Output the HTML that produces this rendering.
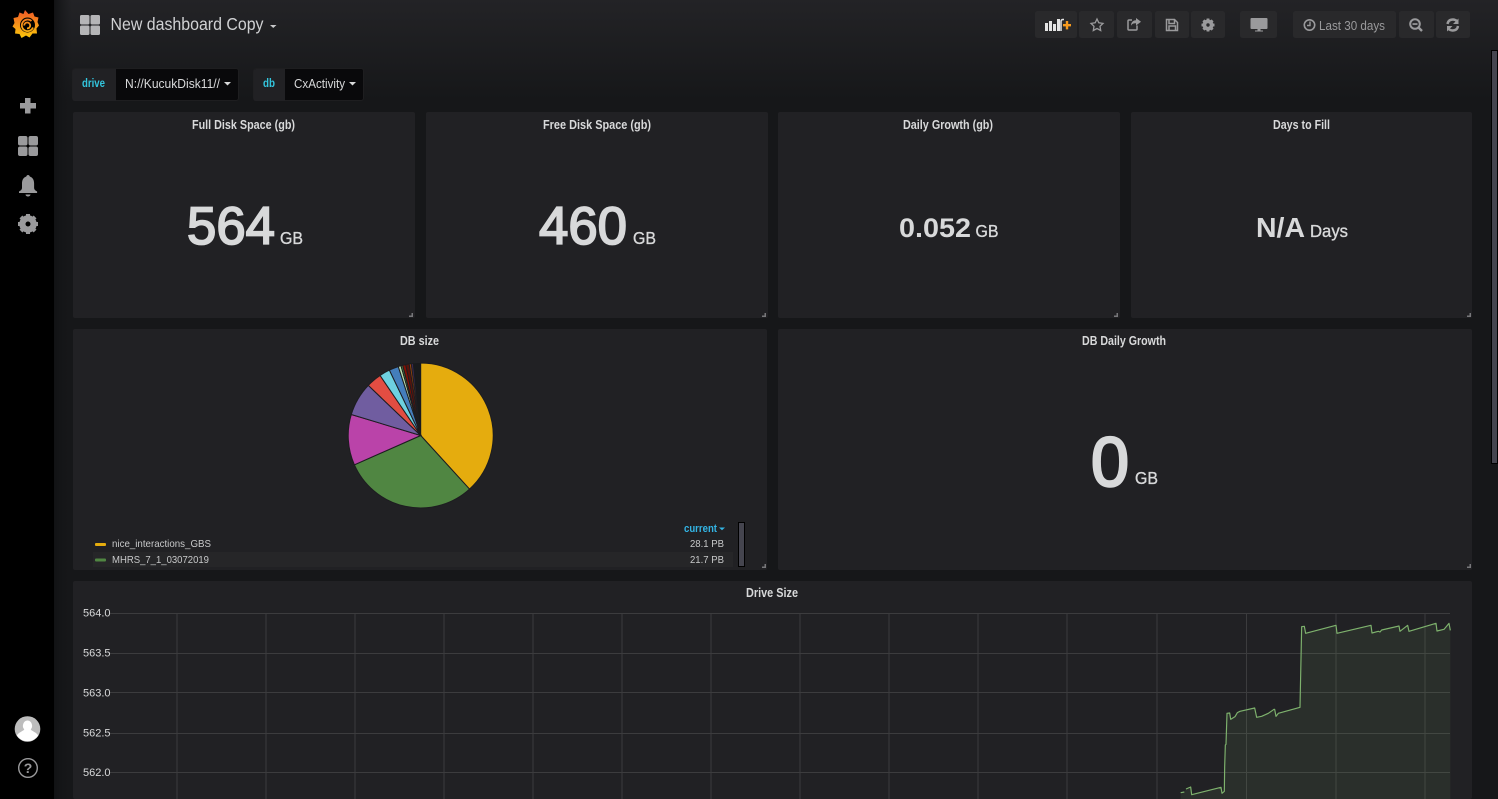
<!DOCTYPE html>
<html lang="en"><head><meta charset="utf-8"><title>New dashboard Copy</title>
<style>
html,body{margin:0;padding:0;width:1498px;height:799px;overflow:hidden;background:#161719}
svg{display:block;position:absolute;left:0;top:0}
text{font-family:"Liberation Sans",sans-serif}
.t{font-size:12.500px;font-weight:700;fill:#d8d9da}
.v{font-weight:400;fill:#d8d9da;stroke:#d8d9da}
.b{font-weight:700;fill:#d8d9da}
.u{font-weight:400;fill:#d8d9da;stroke:#d8d9da;stroke-width:.35px}
.a{font-size:11px;fill:#d8d9da}
.l{font-size:10.500px;fill:#c8c9ca}
.ic{fill:#9a9a9c}
</style></head><body>
<svg width="1498" height="799" viewBox="0 0 1498 799" xmlns="http://www.w3.org/2000/svg">
<defs>
<linearGradient id="top" x1="0" y1="0" x2="0" y2="1"><stop offset="0" stop-color="#232326"/><stop offset="1" stop-color="#161719"/></linearGradient>
<linearGradient id="side" x1="0" y1="0" x2="1" y2="0"><stop offset="0" stop-color="#111214"/><stop offset="1" stop-color="#161719" stop-opacity="0"/></linearGradient>
<linearGradient id="logo" gradientUnits="userSpaceOnUse" x1="0" y1="-14" x2="0" y2="14"><stop offset="0" stop-color="#f05a28"/><stop offset="1" stop-color="#fbca0a"/></linearGradient>
</defs>
<rect width="1498" height="799" fill="#161719"/>
<rect x="54" y="0" width="1444" height="100" fill="url(#top)"/>
<rect x="54" y="0" width="18" height="799" fill="url(#side)"/>
<rect x="0" y="0" width="54" height="799" fill="#000"/>

<!-- logo -->
<g transform="translate(26,24.500)">
<path fill="url(#logo)" d="M-1-14.500 L2.500-10.500 L7-12 L8.500-8 L12.500-7 L11.500-2.500 L13 1 L10.500 4 L11 9 L6.500 9 L3.500 13 L0 11 L-4.500 13.500 L-6.500 9.500 L-11 9 L-10.500 4.500 L-13.500 2 L-11.500-1.500 L-12.500-6.500 L-8-7.500 L-6.500-12 L-2.500-10.500 Z"/>
<circle cx="1.500" cy=".5" r="7.500" fill="#000"/>
<path fill="none" stroke="url(#logo)" stroke-width="1.800" d="M5.500-3.500 A5.800 5.800 0 1 0 7 3 M-1.800 1 A3 3 0 0 1 4.200 1 A2.800 2.800 0 0 1 1 3.800"/>
</g>

<!-- side icons -->
<path class="ic" d="M25 98h5.500v5H36v5.500h-5.500v5H25v-5h-5v-5.500h5z"/>
<g class="ic"><rect x="18" y="136" width="9.500" height="9.500" rx="2"/><rect x="28.500" y="136" width="9.500" height="9.500" rx="2"/><rect x="18" y="146.500" width="9.500" height="9.500" rx="2"/><rect x="28.500" y="146.500" width="9.500" height="9.500" rx="2"/></g>
<path class="ic" d="M28 175c1 0 1.600.7 1.800 1.500 3 1 4.300 3.500 4.300 7v4.500c0 1.500 1.200 2.500 3 3.500v1.500H19v-1.500c1.800-1 3-2 3-3.500v-4.500c0-3.500 1.300-6 4.300-7 .2-.8.800-1.500 1.700-1.500z"/>
<path class="ic" d="M25.500 194.500h5a2.500 2 0 0 1-5 0z"/>
<g transform="translate(28,224)"><circle r="6.500" fill="none" stroke="#9a9a9c" stroke-width="4.500"/><g fill="#9a9a9c"><rect x="-2" y="-10" width="4" height="20"/><rect x="-10" y="-2" width="20" height="4"/><rect x="-2" y="-10" width="4" height="20" transform="rotate(45)"/><rect x="-2" y="-10" width="4" height="20" transform="rotate(-45)"/></g><circle r="2.500" fill="#000"/></g>

<!-- avatar & help -->
<circle cx="27.500" cy="729" r="12.800" fill="#bdbdbd"/>
<path fill="#fff" d="M27.500 720.500a4.800 5.300 0 0 1 3.200 9c1 1.500 6 3 7.500 6a12.800 12.800 0 0 1-21.400 0c1.500-3 6.500-4.500 7.500-6a4.800 5.300 0 0 1 3.200-9z"/>
<circle cx="28" cy="768" r="9.300" fill="none" stroke="#9a9a9c" stroke-width="1.400"/>
<text x="28" y="773" font-size="14" font-weight="700" fill="#9a9a9c" text-anchor="middle">?</text>

<!-- title -->
<g fill="#b5b5b7"><rect x="80" y="15" width="9.500" height="9.500" rx="1.500"/><rect x="90.500" y="15" width="9.500" height="9.500" rx="1.500"/><rect x="80" y="25.500" width="9.500" height="9.500" rx="1.500"/><rect x="90.500" y="25.500" width="9.500" height="9.500" rx="1.500"/></g>
<text x="110.500" y="30" font-size="17.500" fill="#d0d1d3" textLength="153" lengthAdjust="spacingAndGlyphs">New dashboard Copy</text>
<path fill="#c8c9ca" d="M270 25h6.500l-3.250 3z"/>

<!-- toolbar buttons -->
<g fill="#29292b">
<rect x="1035" y="11" width="42" height="27" rx="2.500"/>
<rect x="1079" y="11" width="35" height="27" rx="2.500"/>
<rect x="1117" y="11" width="35" height="27" rx="2.500"/>
<rect x="1155" y="11" width="34" height="27" rx="2.500"/>
<rect x="1191" y="11" width="34" height="27" rx="2.500"/>
<rect x="1240" y="11" width="37" height="27" rx="2.500"/>
<rect x="1293" y="11" width="103" height="27" rx="2.500"/>
<rect x="1399" y="11" width="35" height="27" rx="2.500"/>
<rect x="1436" y="11" width="34" height="27" rx="2.500"/>
</g>
<g fill="#e4e4e4"><rect x="1045" y="23" width="3" height="8"/><rect x="1049" y="21" width="3" height="10"/><rect x="1053" y="24" width="3" height="7"/><rect x="1057" y="19" width="3" height="12"/></g>
<path fill="none" stroke="#e4e4e4" stroke-width="1.500" d="M1061 31V21.500q0-2 2-2h1"/>
<path fill="#f79a1e" d="M1063 24h2.800v-3h2.400v3h2.800v2.400h-2.800v3h-2.400v-3H1063z"/>
<path fill="none" stroke="#9a9a9c" stroke-width="1.300" d="M1097 19l1.800 3.800 4.200.6-3 2.900.7 4.200-3.700-2-3.700 2 .7-4.200-3-2.900 4.200-.6z"/>
<path fill="none" stroke="#9a9a9c" stroke-width="1.500" d="M1137 25.500v3.500q0 1-1 1h-7q-1 0-1-1v-8q0-1 1-1h3"/>
<path fill="#9a9a9c" d="M1136 18l5 3.700-5 3.800v-2.300c-2.500 0-4 .5-5 2.500 0-3 1.500-5.300 5-5.500z"/>
<path fill="none" stroke="#9a9a9c" stroke-width="1.500" d="M1166.500 19.500h8l3 3v8h-11zM1169 19.500v4h5.500v-4M1169 30.500v-4.500h6.500v4.500"/>
<g transform="translate(1208,25)"><circle r="4" fill="none" stroke="#9a9a9c" stroke-width="3"/><g fill="#9a9a9c"><rect x="-1.400" y="-6.500" width="2.800" height="13"/><rect x="-6.500" y="-1.400" width="13" height="2.800"/><rect x="-1.400" y="-6.500" width="2.800" height="13" transform="rotate(45)"/><rect x="-1.400" y="-6.500" width="2.800" height="13" transform="rotate(-45)"/></g><circle r="1.700" fill="#29292b"/></g>
<path fill="#9a9a9c" d="M1251.500 18h15q1 0 1 1v9q0 1-1 1h-6v1.500h2.500v1h-8v-1h2.500V29h-6q-1 0-1-1v-9q0-1 1-1z"/>
<circle cx="1309.500" cy="25" r="5.200" fill="none" stroke="#9a9a9c" stroke-width="1.600"/>
<path fill="none" stroke="#9a9a9c" stroke-width="1.400" d="M1310 21.500V25.500H1307"/>
<text x="1319" y="30" font-size="13" fill="#9a9a9c" textLength="66" lengthAdjust="spacingAndGlyphs">Last 30 days</text>
<circle cx="1415" cy="24" r="4.800" fill="none" stroke="#9a9a9c" stroke-width="2"/>
<path fill="none" stroke="#9a9a9c" stroke-width="2.400" d="M1418.500 27.500l3.500 3.500"/><rect x="1412.500" y="23.200" width="5" height="1.700" fill="#9a9a9c"/>
<path fill="none" stroke="#9a9a9c" stroke-width="2.400" d="M1447.500 24c.5-3 2.500-4.500 5.500-4.500 2 0 3 .7 4.500 2M1458 26c-.5 3-2.500 4.500-5.500 4.500-2 0-3-.7-4.500-2"/>
<path fill="#9a9a9c" d="M1458.500 18.500v5.500h-5.500zM1447 31.500v-5.500h5.500z"/>

<!-- filters -->
<rect x="72.500" y="68.500" width="166" height="32" rx="2.500" fill="#09090b" stroke="#1e1e20"/>
<path d="M116 69H75q-2.500 0-2.500 2.500v27q0 2.500 2.500 2.500H116z" fill="#212124"/>
<text x="82" y="87" font-size="11.500" font-weight="700" style="fill:#33c5dd" textLength="23" lengthAdjust="spacingAndGlyphs">drive</text>
<text x="125" y="88" font-size="13" fill="#d8d9da" textLength="95" lengthAdjust="spacingAndGlyphs">N://KucukDisk11//</text>
<path fill="#d8d9da" d="M224 82h7l-3.500 3.500z"/>
<rect x="253.500" y="68.500" width="110" height="32" rx="2.500" fill="#09090b" stroke="#1e1e20"/>
<path d="M285 69H256q-2.500 0-2.500 2.500v27q0 2.500 2.500 2.500H285z" fill="#212124"/>
<text x="263" y="87" font-size="11.500" font-weight="700" style="fill:#33c5dd" textLength="12" lengthAdjust="spacingAndGlyphs">db</text>
<text x="294" y="88" font-size="13" fill="#d8d9da" textLength="51" lengthAdjust="spacingAndGlyphs">CxActivity</text>
<path fill="#d8d9da" d="M349 82h7l-3.500 3.500z"/>

<!-- panels -->
<g fill="#212124">
<rect x="73" y="112" width="342" height="206" rx="2"/>
<rect x="426" y="112" width="342" height="206" rx="2"/>
<rect x="778" y="112" width="342" height="206" rx="2"/>
<rect x="1131" y="112" width="341" height="206" rx="2"/>
<rect x="73" y="329" width="694" height="241" rx="2"/>
<rect x="778" y="329" width="694" height="241" rx="2"/>
<rect x="73" y="581" width="1399" height="218" rx="2"/>
</g>
<g fill="#77777a">
<path d="M413 313v4h-4v-1.500h2.500V313z"/><path d="M766 313v4h-4v-1.500h2.500V313z"/><path d="M1118 313v4h-4v-1.500h2.500V313z"/><path d="M1471 313v4h-4v-1.500h2.500V313z"/><path d="M766 564v4h-4v-1.500h2.500V564z"/><path d="M1471 564v4h-4v-1.500h2.500V564z"/>
</g>

<text class="t" x="192" y="129" textLength="103" lengthAdjust="spacingAndGlyphs">Full Disk Space (gb)</text>
<text class="t" x="543" y="129" textLength="108" lengthAdjust="spacingAndGlyphs">Free Disk Space (gb)</text>
<text class="t" x="903" y="129" textLength="90" lengthAdjust="spacingAndGlyphs">Daily Growth (gb)</text>
<text class="t" x="1273" y="129" textLength="57" lengthAdjust="spacingAndGlyphs">Days to Fill</text>
<text class="t" x="400" y="345" textLength="39" lengthAdjust="spacingAndGlyphs">DB size</text>
<text class="t" x="1082" y="345" textLength="84" lengthAdjust="spacingAndGlyphs">DB Daily Growth</text>
<text class="t" x="746" y="597" textLength="52" lengthAdjust="spacingAndGlyphs">Drive Size</text>

<text class="v" x="187" y="244" font-size="53" stroke-width="1.800" textLength="88" lengthAdjust="spacingAndGlyphs">564</text>
<text class="u" x="280" y="244" font-size="17.500" textLength="23" lengthAdjust="spacingAndGlyphs">GB</text>
<text class="v" x="539" y="244" font-size="53" stroke-width="1.800" textLength="88" lengthAdjust="spacingAndGlyphs">460</text>
<text class="u" x="633" y="244" font-size="17.500" textLength="23" lengthAdjust="spacingAndGlyphs">GB</text>
<text class="b" x="899" y="237" font-size="27" textLength="72" lengthAdjust="spacingAndGlyphs">0.052</text>
<text class="u" x="975.500" y="237" font-size="17.500" textLength="23" lengthAdjust="spacingAndGlyphs">GB</text>
<text class="b" x="1256" y="237" font-size="27.500" textLength="49" lengthAdjust="spacingAndGlyphs">N/A</text>
<text class="u" x="1310" y="237" font-size="17.500" textLength="38" lengthAdjust="spacingAndGlyphs">Days</text>
<text class="v" x="1091" y="486" font-size="70" stroke-width="2.400" textLength="38" lengthAdjust="spacingAndGlyphs">0</text>
<text class="u" x="1135" y="484" font-size="17.500" textLength="23" lengthAdjust="spacingAndGlyphs">GB</text>

<!-- pie -->
<g stroke="#1d1d20" stroke-width="1" transform="translate(420.700,435.500)">
<path fill="#e5ac0e" d="M0 0V-72.500A72.500 72.500 0 0 1 48.800 53.600Z"/>
<path fill="#508642" d="M0 0L48.800 53.600A72.500 72.500 0 0 1-66.300 29.300Z"/>
<path fill="#ba43a9" d="M0 0L-66.300 29.300A72.500 72.500 0 0 1-69.400-21Z"/>
<path fill="#705da0" d="M0 0L-69.400-21A72.500 72.500 0 0 1-52.400-50.100Z"/>
<path fill="#e24d42" d="M0 0L-52.400-50.100A72.500 72.500 0 0 1-40.600-60Z"/>
<path fill="#6ed0e0" d="M0 0L-40.600-60A72.500 72.500 0 0 1-31.300-65.400Z"/>
<path fill="#447ebc" d="M0 0L-31.300-65.400A72.500 72.500 0 0 1-22.400-68.900Z"/>
<path fill="#b7dbab" d="M0 0L-22.400-68.900A72.500 72.500 0 0 1-19.700-69.800Z"/>
<path fill="#508642" d="M0 0L-19.700-69.800A72.500 72.500 0 0 1-18-70.200Z"/>
<path fill="#890f02" d="M0 0L-18-70.200A72.500 72.500 0 0 1-15-70.900Z"/>
<path fill="#58140c" d="M0 0L-15-70.900A72.500 72.500 0 0 1-11.500-71.600Z"/>
<path fill="#99440a" d="M0 0L-11.500-71.600A72.500 72.500 0 0 1-9.400-71.900Z"/>
<path fill="#3f2b5b" d="M0 0L-9.400-71.900A72.500 72.500 0 0 1-7.500-72.100Z"/>
<path fill="#181a1c" stroke="none" d="M0 0L-7.500-72.100A72.500 72.500 0 0 1 0-72.500Z"/>
</g>

<!-- legend -->
<text x="684" y="532" font-size="11" font-weight="700" fill="#33b5e5" textLength="33" lengthAdjust="spacingAndGlyphs">current</text>
<path fill="#33b5e5" d="M719 527.500h6l-3 2.800z"/>
<rect x="738.500" y="522.500" width="6" height="44" fill="#45454f" stroke="#000"/>
<rect x="93" y="552" width="640" height="15" fill="#262628"/>
<rect x="95" y="543" width="11" height="3" rx="1" fill="#e5ac0e"/>
<rect x="95" y="558.500" width="11" height="3" rx="1" fill="#508642"/>
<text class="l" x="112" y="547" textLength="99" lengthAdjust="spacingAndGlyphs">nice_interactions_GBS</text>
<text class="l" x="112" y="563" textLength="97" lengthAdjust="spacingAndGlyphs">MHRS_7_1_03072019</text>
<text class="l" x="690" y="547" textLength="34" lengthAdjust="spacingAndGlyphs">28.1 PB</text>
<text class="l" x="690" y="563" textLength="34" lengthAdjust="spacingAndGlyphs">21.7 PB</text>

<!-- graph -->
<g stroke="#3c3c3e" stroke-width="1">
<path d="M110 613.500H1450M110 653.500H1450M110 692.500H1450M110 733.500H1450M110 772.500H1450"/>
<path d="M177 613V799M266 613V799M355 613V799M444 613V799M533 613V799M622 613V799M711 613V799M800 613V799M889 613V799M978 613V799M1067 613V799M1157 613V799M1246.500 613V799M1336 613V799M1425 613V799"/>
</g>
<text class="a" x="83" y="616.500">564.0</text>
<text class="a" x="83" y="656.500">563.5</text>
<text class="a" x="83" y="696.500">563.0</text>
<text class="a" x="83" y="736.500">562.5</text>
<text class="a" x="83" y="776">562.0</text>
<g transform="translate(1140,600) scale(.33333)">
<path fill="#7eb26d" fill-opacity=".1" d="M122 578L133 576L138 567L152 561L155 584L243 562L246 580L253 574L254 500L256 435L258 433L261 340L269 339L272 358L285 350L292 338L300 334L344 324L350 352L365 349L385 340L402 328L404 328L408 349L415 340L480 322L485 80L493 79L497 100L588 76L591 100L693 76L696 99L715 94L720 96L725 90L777 78L780 94L803 76L807 94L888 70L891 93L912 88L927 70L931 91V597H122Z"/>
<path fill="none" stroke="#7eb26d" stroke-width="3.500" stroke-linejoin="round" d="M122 578L133 576M138 567L152 561L155 584L243 562L246 580L253 574L254 500L256 435L258 433L261 340L269 339L272 358L285 350L292 338L300 334L344 324L350 352L365 349L385 340L402 328L404 328L408 349L415 340L480 322L485 80L493 79L497 100L588 76L591 100L693 76L696 99L715 94L720 96L725 90L777 78L780 94L803 76L807 94L888 70L891 93L912 88L927 70L931 91"/>
</g>

<!-- scrollbar -->
<rect x="1491.500" y="50.500" width="6" height="413" fill="#45454f" stroke="#000"/>
</svg>
</body></html>
